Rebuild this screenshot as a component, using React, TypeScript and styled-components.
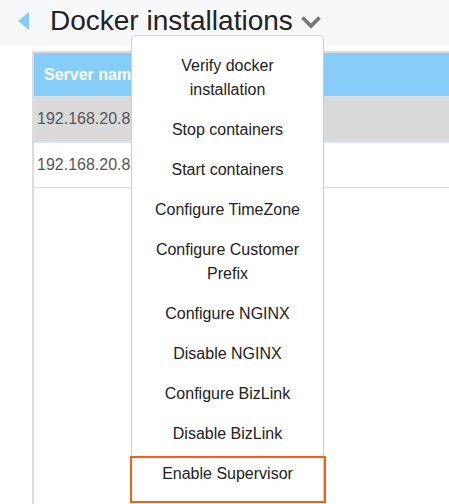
import React from "react";
import styled, { createGlobalStyle } from "styled-components";

const Global = createGlobalStyle`
  html, body { margin: 0; padding: 0; background: #fff; }
  body { font-family: "Liberation Sans", Arial, sans-serif; overflow: hidden; }
  * { box-sizing: border-box; }
`;

const Page = styled.div`
  position: relative;
  width: 449px;
  height: 504px;
  overflow: hidden;
`;

const Header = styled.div`
  height: 46px;
  background: #f7f8fa;
  display: flex;
  align-items: center;
  padding: 0 0 4px 18px;
`;

const BackArrow = styled.div`
  width: 0;
  height: 0;
  border-top: 9px solid transparent;
  border-bottom: 9px solid transparent;
  border-right: 11px solid #87cdf9;
  margin-right: 21px;
`;

const Title = styled.h1`
  margin: 0;
  font-size: 28px;
  font-weight: normal;
  color: #222;
  line-height: 34px;
`;

const Chevron = styled.svg`
  margin-left: 7px;
  margin-top: 2px;
`;

const Body = styled.div`
  padding: 5px 0 0 32px;
`;

const TableWrap = styled.div`
  border-left: 2px solid #dcdcdc;
  height: 460px;
`;

const Table = styled.div`
  width: 600px;
  border-top: 2px solid #dcdcdc;
`;

const HeadRow = styled.div`
  height: 44px;
  background: #87cdf9;
  border-bottom: 1px solid #dde3ea;
  display: flex;
  align-items: center;
  padding-left: 10px;
  color: #fff;
  font-weight: bold;
  font-size: 16px;
`;

const Row = styled.div<{ $shade?: boolean }>`
  height: ${(p) => (p.$shade ? 46 : 45)}px;
  background: ${(p) => (p.$shade ? "#dadada" : "#fff")};
  border-bottom: ${(p) => (p.$shade ? "2px solid #dde3ea" : "1px solid #dcdcdc")};
  display: flex;
  align-items: center;
  padding-left: 3px;
  color: #555;
  font-size: 16px;
`;

const Menu = styled.div`
  position: absolute;
  left: 131px;
  top: 35px;
  width: 193px;
  height: 500px;
  background: #fff;
  border: 1px solid #d0d0d0;
  border-radius: 4px;
  padding-top: 10px;
  box-shadow: 0 1px 2px rgba(0, 0, 0, 0.05);
`;

const Item = styled.div`
  padding: 8px 18px;
  line-height: 24px;
  font-size: 16px;
  color: #222;
  text-align: center;
`;

const Highlight = styled.div`
  position: absolute;
  left: 130px;
  top: 456px;
  width: 196px;
  height: 47px;
  border: 2px solid #f4600f;
`;

const items = [
  "Verify docker installation",
  "Stop containers",
  "Start containers",
  "Configure TimeZone",
  "Configure Customer Prefix",
  "Configure NGINX",
  "Disable NGINX",
  "Configure BizLink",
  "Disable BizLink",
  "Enable Supervisor",
];

export default function App() {
  return (
    <Page>
      <Global />
      <Header>
        <BackArrow />
        <Title>Docker installations</Title>
        <Chevron width="22" height="14" viewBox="0 0 22 14">
          <polyline
            points="2.5,2.5 11,11 19.5,2.5"
            fill="none"
            stroke="#777"
            strokeWidth="3.8"
          />
        </Chevron>
      </Header>
      <Body>
        <TableWrap>
          <Table>
            <HeadRow>Server name</HeadRow>
            <Row $shade>192.168.20.8</Row>
            <Row>192.168.20.8</Row>
          </Table>
        </TableWrap>
      </Body>
      <Menu>
        {items.map((t) => (
          <Item key={t}>{t}</Item>
        ))}
      </Menu>
      <Highlight />
    </Page>
  );
}
